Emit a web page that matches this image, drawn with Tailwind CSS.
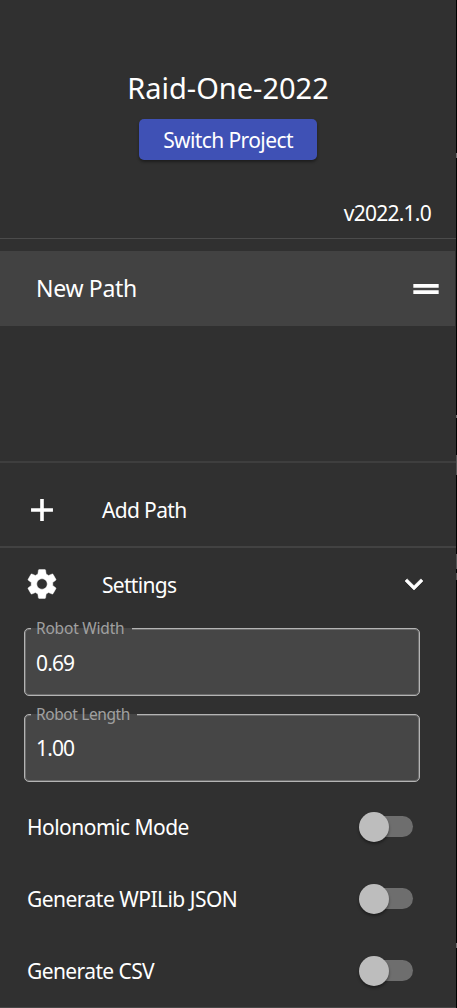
<!DOCTYPE html>
<html lang="en">
<head>
<meta charset="utf-8">
<title>Raid-One-2022</title>
<script src="https://cdn.jsdelivr.net/npm/@tailwindcss/browser@4"></script>
</head>
<body class="w-[457px] h-[1008px] overflow-hidden bg-black flex font-['Noto_Sans','Open_Sans',sans-serif] text-white text-[21px] leading-7">
<aside class="w-[456px] h-full bg-[#303030] flex flex-col whitespace-nowrap">
  <header class="h-[238px] shrink-0 flex flex-col items-center pt-[68px]">
    <h1 class="text-[29px] leading-10">Raid-One-2022</h1>
    <button class="mt-[11px] w-[178px] h-[41px] rounded-[5px] bg-[#3f51b5] shadow-[0_2px_3px_rgba(0,0,0,0.4)] flex items-center justify-center"><span class="tracking-[-0.6px] pt-px">Switch Project</span></button>
    <p class="mt-[39px] self-end pr-[25px]"><span class="tracking-[-0.75px]">v2022.1.0</span></p>
  </header>
  <div class="h-px shrink-0 bg-[#4b4b4b]"></div>
  <div class="mt-3 h-[75px] shrink-0 w-[455px] bg-[#424242] flex items-center justify-between pl-[36px] pr-[10px]">
    <span class="text-[23px] tracking-[-0.3px] pb-[2px]">New Path</span>
    <svg class="size-[38px]" viewBox="0 0 24 24" fill="#fff"><path d="M20 8.8H4v2.4h16V8.8zM4 15.2h16v-2.4H4v2.4z"/></svg>
  </div>
  <div class="mt-[135px] h-[2px] shrink-0 bg-[#3e3e3e]"></div>
  <div class="h-[83px] shrink-0 flex items-center pl-6 pt-[11px]">
    <svg class="size-9" viewBox="0 0 24 24" fill="#fff"><path d="M19.3 13.2h-6.1v6.1h-2.4v-6.1H4.7v-2.4h6.1V4.7h2.4v6.1h6.1v2.4z"/></svg>
    <span class="ml-[42px] tracking-[-0.65px]">Add Path</span>
  </div>
  <div class="h-[2px] shrink-0 bg-[#424242]"></div>
  <div class="h-[72px] shrink-0 flex items-center pl-6 pr-6">
    <svg class="size-9" viewBox="0 0 24 24" fill="#fff" stroke="#fff" stroke-width=".3"><path d="M19.14 12.94c.04-.3.06-.61.06-.94 0-.32-.02-.64-.07-.94l2.03-1.58c.18-.14.23-.41.12-.61l-1.92-3.32c-.12-.22-.37-.29-.59-.22l-2.39.96c-.5-.38-1.03-.7-1.62-.94l-.36-2.54c-.04-.24-.24-.41-.48-.41h-3.84c-.24 0-.43.17-.47.41l-.36 2.54c-.59.24-1.13.57-1.62.94l-2.39-.96c-.22-.08-.47 0-.59.22L2.74 8.87c-.12.21-.08.47.12.61l2.03 1.58c-.05.3-.09.63-.09.94s.02.64.07.94l-2.03 1.58c-.18.14-.23.41-.12.61l1.92 3.32c.12.22.37.29.59.22l2.39-.96c.5.38 1.03.7 1.62.94l.36 2.54c.05.24.24.41.48.41h3.84c.24 0 .44-.17.47-.41l.36-2.54c.59-.24 1.13-.56 1.62-.94l2.39.96c.22.08.47 0 .59-.22l1.92-3.32c.12-.22.07-.47-.12-.61l-2.01-1.58zM12 15.5c-1.93 0-3.5-1.57-3.5-3.5s1.57-3.5 3.5-3.5 3.5 1.57 3.5 3.5-1.57 3.5-3.5 3.5z"/></svg>
    <span class="ml-[42px] tracking-[-0.7px] pt-px">Settings</span>
    <svg class="size-9 ml-auto" viewBox="0 0 24 24" fill="#fff" stroke="#fff" stroke-width=".4"><path d="M16.59 8.59L12 13.17 7.41 8.59 6 10l6 6 6-6z"/></svg>
  </div>
  <div class="mt-[8px] ml-6 w-[396px] h-[68px] shrink-0 relative bg-[#464646] border border-[#b4b4b4] shadow-[inset_0_0_0_1px_#6c6c6c] rounded-[5px] flex items-center pl-[11px]">
    <span class="tracking-[-0.85px] pt-px">0.69</span>
    <span class="absolute left-[6px] -top-px w-[101px] h-[2px] bg-[#464646]"></span>
    <span class="absolute left-[11px] -top-[13px] text-[15.5px] tracking-[-0.2px] leading-6 text-[#a0a0a0]">Robot Width</span>
  </div>
  <div class="mt-[18px] ml-6 w-[396px] h-[68px] shrink-0 relative bg-[#464646] border border-[#b4b4b4] shadow-[inset_0_0_0_1px_#6c6c6c] rounded-[5px] flex items-center pl-[11px]">
    <span class="tracking-[-0.85px]">1.00</span>
    <span class="absolute left-[6px] -top-px w-[106px] h-[2px] bg-[#464646]"></span>
    <span class="absolute left-[11px] -top-[13px] text-[15.5px] tracking-[-0.4px] leading-6 text-[#a0a0a0]">Robot Length</span>
  </div>
  <div class="mt-[9px] h-[72px] shrink-0 flex items-center justify-between pl-[27px] pr-[43.5px]">
    <span class="tracking-[-0.52px]">Holonomic Mode</span>
    <span class="w-[54px] h-[31px] pb-px flex items-center"><span class="size-[30px] shrink-0 rounded-full bg-[#bdbdbd] shadow-[0_2px_3px_rgba(0,0,0,0.4)] z-10"></span><span class="-ml-[26px] w-[50px] shrink-0 h-[21px] rounded-full bg-[#6e6e6e]"></span></span>
  </div>
  <div class="h-[72px] shrink-0 flex items-center justify-between pl-[27px] pr-[43.5px]">
    <span class="tracking-[-0.52px]">Generate WPILib JSON</span>
    <span class="w-[54px] h-[31px] pb-px flex items-center"><span class="size-[30px] shrink-0 rounded-full bg-[#bdbdbd] shadow-[0_2px_3px_rgba(0,0,0,0.4)] z-10"></span><span class="-ml-[26px] w-[50px] shrink-0 h-[21px] rounded-full bg-[#6e6e6e]"></span></span>
  </div>
  <div class="h-[72px] shrink-0 flex items-center justify-between pl-[27px] pr-[43.5px]">
    <span class="tracking-[-0.6px]">Generate CSV</span>
    <span class="w-[54px] h-[31px] pb-px flex items-center"><span class="size-[30px] shrink-0 rounded-full bg-[#bdbdbd] shadow-[0_2px_3px_rgba(0,0,0,0.4)] z-10"></span><span class="-ml-[26px] w-[50px] shrink-0 h-[21px] rounded-full bg-[#6e6e6e]"></span></span>
  </div>
  <div class="mt-auto h-[2px] shrink-0 bg-[#484848]"></div>
</aside>
<div class="w-px h-full flex flex-col">
  <div class="mt-[153px] h-[5px] shrink-0 bg-[#6e6e6e]"></div>
  <div class="mt-[257px] h-[3px] shrink-0 bg-[#6e6e6e]"></div>
  <div class="mt-[37px] h-[20px] shrink-0 bg-[#555]"></div>
  <div class="mt-[79px] h-[15px] shrink-0 bg-[#555]"></div>
  <div class="mt-[4px] h-[7px] shrink-0 bg-[#555]"></div>
  <div class="mt-[363px] h-[5px] shrink-0 bg-[#6e6e6e]"></div>
</div>
</body>
</html>
